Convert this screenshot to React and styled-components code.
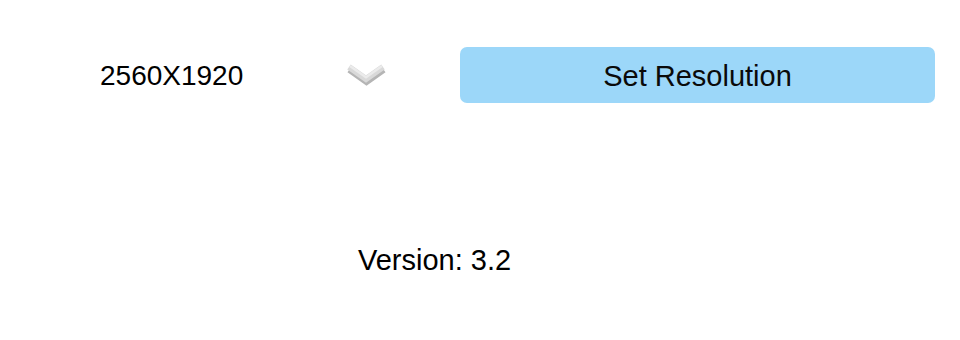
import React, { useState } from 'react';
import styled, { createGlobalStyle } from 'styled-components';

const GlobalStyle = createGlobalStyle`
    body {
        margin: 0;
        background: #ffffff;
        font-family: "Liberation Sans", Arial, sans-serif;
        color: #000000;
    }
`

const Page = styled.div`
    width: 960px;
    height: 340px;
    display: flex;
    flex-direction: column;
    box-sizing: border-box;
    padding-top: 47px;
`

const Toolbar = styled.div`
    display: flex;
    flex-direction: row;
    align-items: center;
    padding-right: 25px;
`

const Picker = styled.div`
    flex: 1;
    display: flex;
    flex-direction: row;
    align-items: center;
    padding-left: 100px;
    cursor: pointer;
`

const PickerValue = styled.span`
    width: 244px;
    font-size: 28px;
    line-height: 32px;
    padding-top: 2px;
`

const Chevron = styled.svg`
    display: block;
    width: 46px;
    height: 28px;
`

const SetButton = styled.button`
    width: 475px;
    height: 56px;
    border: none;
    border-radius: 7px;
    background: #9cd7f9;
    color: #0a0a0a;
    font-family: "Liberation Sans", Arial, sans-serif;
    font-size: 29px;
    padding: 2px 0 0;
    cursor: pointer;
`

const Footer = styled.div`
    margin-top: 140px;
    padding-left: 358px;
`

const VersionText = styled.span`
    font-size: 29px;
    line-height: 34px;
`

const App = () => {

    const [resolution] = useState('2560X1920');

    return (
        <>
            <GlobalStyle />
            <Page>
                <Toolbar>
                    <Picker>
                        <PickerValue>{resolution}</PickerValue>
                        <Chevron viewBox='0 0 46 28'>
                            {/* shaded 3d-ish chevron */}
                            <polyline points='5,6 22,18 39,6' fill='none' stroke='#b5b5b5' strokeWidth='7' strokeLinejoin='miter' transform='translate(0.5 2.5)' />
                            <polyline points='5,6 22,18 39,6' fill='none' stroke='#d9d9d9' strokeWidth='6' strokeLinejoin='miter' />
                            <polyline points='6,5 22,16.3 38,5' fill='none' stroke='#ebebeb' strokeWidth='2.5' strokeLinejoin='miter' />
                        </Chevron>
                    </Picker>
                    <SetButton>Set Resolution</SetButton>
                </Toolbar>
                <Footer>
                    <VersionText>Version: 3.2</VersionText>
                </Footer>
            </Page>
        </>
    );
}

export default App;
